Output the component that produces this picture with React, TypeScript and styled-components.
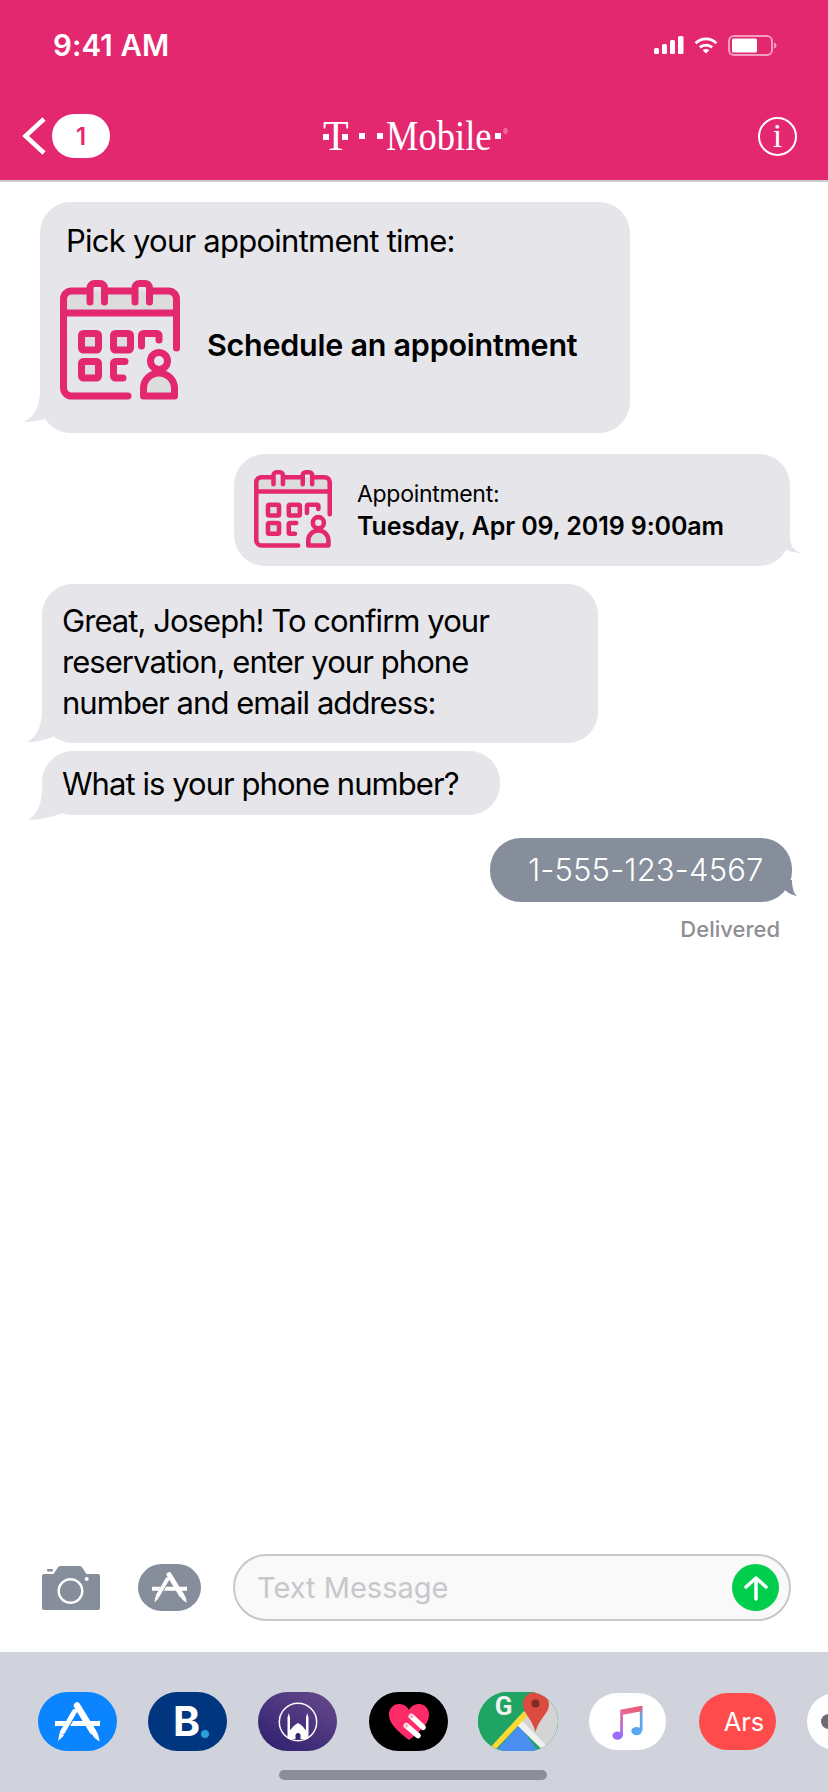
import React from "react";
import styled, { createGlobalStyle } from "styled-components";

const pink = "#e4286f";
const fillGray = "#dcdcdc";
const bubbleGray = "#e5e5ea";
const sentGray = "#858e9a";

const GlobalStyle = createGlobalStyle`
  html, body {
    margin: 0;
    padding: 0;
    background: #fff;
  }
  body {
    font-family: Inter, "Liberation Sans", sans-serif;
    color: #000;
  }
`;

const CalendarIcon: React.FC<{ size: number }> = ({ size }) => (
  <svg width={size} height={size} viewBox="0 0 120 120" fill="none">
    <path d="M4 11h112v22H4z" fill={fillGray} />
    <g stroke={pink} strokeWidth="7" strokeLinecap="round" strokeLinejoin="round">
      <path d="M116.500 68V19a8 8 0 0 0-8-8H93M71 11H48M26 11H11.500a8 8 0 0 0-8 8v89a8 8 0 0 0 8 8H68" />
      <path d="M3.500 33h113" />
      <path d="M30 22V8a4.500 4.500 0 0 1 4.500-4.500h5.500A4.500 4.500 0 0 1 44.500 8v14" />
      <path d="M75 22V8a4.500 4.500 0 0 1 4.500-4.500h5.500A4.500 4.500 0 0 1 89.500 8v14" />
      <rect x="21.500" y="53.500" width="17" height="16.500" rx="2" fill={fillGray} />
      <rect x="53.500" y="53.500" width="17" height="16.500" rx="2" fill={fillGray} />
      <path d="M81.500 66V55.500a2 2 0 0 1 2-2H97a2 2 0 0 1 2 2V60" />
      <rect x="21.500" y="81.500" width="17" height="16.500" rx="2" fill={fillGray} />
      <path d="M65 81.500H55.500a2 2 0 0 0-2 2V96a2 2 0 0 0 2 2H63" />
      <circle cx="99" cy="81" r="8.500" />
      <path d="M83.500 116v-7.500a15.500 15.500 0 0 1 31 0V116z" fill={fillGray} />
    </g>
  </svg>
);

const AppStoreGlyph: React.FC<{ scale?: number }> = ({ scale = 1 }) => (
  <svg width={45 * scale} height={40 * scale} viewBox="0 0 45 40" fill="#fff">
    <path d="M0 19h11l-2.500 5H1.500a2.500 2.500 0 0 1-1.500-5zM18 19h10l2.800 5H15.200zM33.500 19H43a2.500 2.500 0 0 1 2 5h-8.500z" />
    <path d="M22 3.500L37.500 29" stroke="#fff" strokeWidth="6.500" strokeLinecap="round" />
    <path d="M19.500 9.500L7.500 30" stroke="#fff" strokeWidth="5" strokeLinecap="round" />
    <path d="M4.500 31l4.500 2.500-6 5.500z" />
    <path d="M36 30l4.500-2.500c2 3 3.500 7 4 12-3.500-2-7-5-8.500-9.500z" />
  </svg>
);

// tail shapes, drawn with the tip on the left edge of the box
const tailPick = { d: "M17 0C17 15 12 28 0 32C8 32 15 31 22 29L30 0Z", w: 30, h: 33 };
const tailConfirm = { d: "M15 0C15 12 11 26 0 31C9 31 17 29 26 26L30 0Z", w: 30, h: 32 };
const tailQuestion = { d: "M14 0C14 14 10 26 0 32C12 32 24 29 35 25L40 0Z", w: 40, h: 33 };
const tailAppointment = { d: "M12 0C12 9 8 14 0 16C5 16 11 15 15 13L24 0Z", w: 24, h: 17 };
const tailSent = { d: "M5 0C5 8 3 14 0 16C4 15.500 9 13 12 10L22 0Z", w: 22, h: 17 };

type TailShape = { d: string; w: number; h: number };

const TailSvg: React.FC<{ shape: TailShape; color: string; className?: string }> = ({ shape, color, className }) => (
  <svg className={className} width={shape.w} height={shape.h} viewBox={`0 0 ${shape.w} ${shape.h}`}>
    <path d={shape.d} fill={color} />
  </svg>
);

const LeftTail = styled(TailSvg)<{ $reach: number; $bottom: number }>`
  position: absolute;
  left: ${(p) => -p.$reach}px;
  bottom: ${(p) => p.$bottom}px;
`;

const RightTail = styled(TailSvg)<{ $reach: number; $bottom: number }>`
  position: absolute;
  right: ${(p) => -p.$reach}px;
  bottom: ${(p) => p.$bottom}px;
  transform: scaleX(-1);
`;

const Page = styled.div`
  width: 828px;
  height: 1792px;
  display: flex;
  flex-direction: column;
  overflow: hidden;
`;

const Header = styled.header`
  flex: none;
  height: 180px;
  background: ${pink};
  border-bottom: 2px solid #cdcdcd;
  color: #fff;
  display: flex;
  flex-direction: column;
`;

const StatusBar = styled.div`
  height: 92px;
  box-sizing: border-box;
  padding: 0 51px 2px 53px;
  display: flex;
  justify-content: space-between;
  align-items: center;
`;

const Clock = styled.span`
  font-size: 29.500px;
  font-weight: 600;
  letter-spacing: 0.1px;
`;

const StatusIcons = styled.div`
  display: flex;
  align-items: center;
  gap: 10px;
`;

const NavBar = styled.div`
  height: 88px;
  padding: 0 31px 0 22px;
  display: grid;
  grid-template-columns: 1fr auto 1fr;
  align-items: center;
`;

const BackGroup = styled.div`
  display: flex;
  align-items: center;
  gap: 6px;
`;

const CountBadge = styled.span`
  width: 58px;
  height: 44px;
  border-radius: 22px;
  background: #fff;
  color: ${pink};
  font-size: 24px;
  font-weight: 600;
  display: flex;
  align-items: center;
  justify-content: center;
`;

const Logo = styled.div`
  display: flex;
  align-items: center;
  width: 183px;
  margin-left: 10px;
  font-family: "Liberation Serif", serif;
  font-size: 42px;
  line-height: 1;
`;

const LogoDot = styled.i<{ $ml?: number }>`
  display: block;
  flex: none;
  width: 6px;
  height: 6px;
  background: #fff;
  margin-left: ${(p) => p.$ml ?? 0}px;
`;

const LogoT = styled.span`
  position: relative;
  flex: none;
  width: 25px;
  text-align: center;
`;

const LogoTDot = styled(LogoDot)<{ $end: "left" | "right" }>`
  position: absolute;
  top: 19px;
  ${(p) => p.$end}: 0;
`;

const LogoWord = styled.span`
  flex: none;
  width: 105px;
  margin-left: 3px;
  white-space: nowrap;
  transform: scaleX(0.87);
  transform-origin: left center;
`;

const LogoMark = styled.span`
  font-size: 7px;
  margin: -10px 0 0 2px;
  opacity: 0.7;
  font-family: "Liberation Sans", sans-serif;
`;

const InfoIcon = styled.div`
  justify-self: end;
  width: 39px;
  height: 39px;
  border: 2px solid #fff;
  border-radius: 50%;
  box-sizing: border-box;
  display: flex;
  align-items: center;
  justify-content: center;
  font-family: "Liberation Serif", serif;
  font-size: 34px;
  line-height: 1;
`;

const Messages = styled.main`
  flex: 1;
  min-height: 0;
  padding-top: 20px;
  display: flex;
  flex-direction: column;
`;

const Bubble = styled.div<{
  $side: "left" | "right";
  $x: number;
  $top: number;
  $w: number;
  $h: number;
  $bg?: string;
}>`
  position: relative;
  box-sizing: border-box;
  flex: none;
  width: ${(p) => p.$w}px;
  height: ${(p) => p.$h}px;
  margin-top: ${(p) => p.$top}px;
  ${(p) => (p.$side === "left" ? `margin-left: ${p.$x}px;` : `margin-left: auto; margin-right: ${p.$x}px;`)}
  background: ${(p) => p.$bg ?? bubbleGray};
  border-radius: 31px;
`;

const PickBubble = styled(Bubble)`
  padding: 20px 0 0 20px;
`;

const PickTitle = styled.div`
  font-size: 31px;
  line-height: 38px;
  margin-left: 6px;
  letter-spacing: -0.75px;
  white-space: nowrap;
`;

const ScheduleRow = styled.div`
  margin-top: 20px;
  display: flex;
  align-items: center;
  gap: 27px;
`;

const ScheduleLabel = styled.div`
  margin-top: 8px;
  font-size: 30.500px;
  font-weight: 600;
  letter-spacing: -0.25px;
  white-space: nowrap;
`;

const AppointmentBubble = styled(Bubble)`
  padding: 16px 0 0 20px;
  display: flex;
  align-items: flex-start;
  gap: 25px;
`;

const AppointmentText = styled.div`
  padding-top: 8px;
`;

const AppointmentLabel = styled.div`
  font-size: 23px;
  line-height: 32px;
  letter-spacing: -0.3px;
`;

const AppointmentValue = styled.div`
  font-size: 25px;
  font-weight: 600;
  line-height: 33px;
  letter-spacing: -0.1px;
  white-space: nowrap;
`;

const BubbleText = styled.div`
  padding: 16px 20px 0;
  font-size: 31px;
  line-height: 41px;
  letter-spacing: -0.95px;
  white-space: nowrap;
`;

const QuestionText = styled(BubbleText)`
  padding-top: 12px;
`;

const PhoneText = styled.div`
  padding: 11px 0 0 38px;
  color: #fff;
  font-size: 31px;
  font-weight: 300;
  line-height: 41px;
  letter-spacing: 0.15px;
  white-space: nowrap;
`;

const Delivered = styled.div`
  margin: 13px 48px 0 0;
  text-align: right;
  font-size: 22px;
  font-weight: 500;
  line-height: 28px;
  color: #8e8e93;
`;

const Composer = styled.div`
  flex: none;
  height: 98px;
  padding: 0 37px 0 42px;
  box-sizing: border-box;
  display: flex;
  align-items: flex-start;
`;

const ComposerIcon = styled.div`
  width: 58px;
  height: 44px;
  margin-top: 12px;
`;

const AppPill = styled.div`
  width: 63px;
  height: 47px;
  margin: 10px 32px 0 38px;
  border-radius: 24px;
  background: ${sentGray};
  display: flex;
  align-items: center;
  justify-content: center;
`;

const InputField = styled.div`
  flex: 1;
  height: 67px;
  box-sizing: border-box;
  border: 2px solid #c8c8cc;
  border-radius: 34px;
  background: #f9f9f9;
  padding: 0 10px 0 22px;
  display: flex;
  align-items: center;
  justify-content: space-between;
`;

const Placeholder = styled.span`
  font-size: 29px;
  color: #c7c7cc;
`;

const SendButton = styled.div`
  width: 47px;
  height: 47px;
  border-radius: 50%;
  background: #00ce4c;
  display: flex;
  align-items: center;
  justify-content: center;
`;

const Dock = styled.div`
  flex: none;
  height: 140px;
  background: #d0d3db;
  position: relative;
  overflow: hidden;
`;

const DockRow = styled.div`
  padding: 40px 0 0 38px;
  display: flex;
  align-items: center;
  width: 900px;
`;

const AppTile = styled.div<{ $bg: string; $w?: number; $h?: number; $ml?: number }>`
  flex: none;
  width: ${(p) => p.$w ?? 79}px;
  height: ${(p) => p.$h ?? 59}px;
  margin-left: ${(p) => p.$ml ?? 0}px;
  border-radius: 30px;
  background: ${(p) => p.$bg};
  display: flex;
  align-items: center;
  justify-content: center;
  overflow: hidden;
  position: relative;
`;

const BookingB = styled.span`
  color: #fff;
  font-size: 41px;
  font-weight: 700;
  line-height: 1;
  margin-left: -2px;
`;

const BookingDot = styled.i`
  position: absolute;
  left: 53px;
  top: 38px;
  width: 8px;
  height: 8px;
  border-radius: 50%;
  background: #2a9fd8;
`;

const ArsLabel = styled.span`
  color: #fff;
  font-size: 25.500px;
  margin-left: 13px;
`;

const CutOffDot = styled.i`
  position: absolute;
  left: 14px;
  top: 21px;
  width: 15px;
  height: 15px;
  border-radius: 50%;
  background: #6b6b70;
`;

const HomeIndicator = styled.div`
  position: absolute;
  left: 279px;
  bottom: 12px;
  width: 268px;
  height: 10px;
  border-radius: 5px;
  background: #8a8f99;
`;

const SignalIcon = () => (
  <svg width="30" height="18" viewBox="0 0 30 18" fill="#fff">
    <rect x="0" y="12" width="5" height="6" rx="1.500" />
    <rect x="8" y="8" width="5" height="10" rx="1.500" />
    <rect x="16" y="4" width="5" height="14" rx="1.500" />
    <rect x="24" y="0" width="5.500" height="18" rx="1.500" />
  </svg>
);

const WifiIcon = () => (
  <svg width="24" height="17" viewBox="0 0 25 18" fill="none" stroke="#fff" strokeWidth="3">
    <path d="M1.500 6.500C7.500 .5 17.500 .5 23.500 6.500" />
    <path d="M6 11c3.500-3.300 9.500-3.300 13 0" />
    <path d="M12.500 17.500L9 14c2-1.700 5-1.700 7 0z" fill="#fff" stroke="none" />
  </svg>
);

const BatteryIcon = () => (
  <svg width="49" height="21" viewBox="0 0 49 21">
    <rect x="1" y="1" width="43" height="19" rx="5" fill="none" stroke="#fff" strokeOpacity=".55" strokeWidth="2" />
    <rect x="4" y="3.500" width="25" height="14" rx="1.500" fill="#fff" />
    <path d="M46 7.500c1.500.4 2.500 1.500 2.500 3s-1 2.600-2.500 3z" fill="#fff" fillOpacity=".55" />
  </svg>
);

const BackChevron = () => (
  <svg width="24" height="38" viewBox="0 0 24 38" fill="none" stroke="#fff" strokeWidth="4.500">
    <path d="M22 2L3.500 19 22 36" />
  </svg>
);

const CameraIcon = () => (
  <svg width="58" height="44" viewBox="0 0 58 44">
    <path
      fillRule="evenodd"
      fill={sentGray}
      d="M2 8h9.500l4-6c.6-1 1.500-2 3-2h19c1.500 0 2.400 1 3 2l4 6H56a2 2 0 0 1 2 2v32a2 2 0 0 1-2 2H2a2 2 0 0 1-2-2V10a2 2 0 0 1 2-2zm26.500 4a13 13 0 1 0 0 26 13 13 0 0 0 0-26zm0 2.400a10.600 10.600 0 1 1 0 21.200 10.600 10.600 0 0 1 0-21.200zM44.700 11a2 2 0 1 0 0 4 2 2 0 0 0 0-4z"
    />
    <rect x="5" y="3" width="6" height="2.500" rx="1" fill={sentGray} />
  </svg>
);

const UpArrow = () => (
  <svg width="24" height="26" viewBox="0 0 24 26" fill="none" stroke="#fff" strokeWidth="3.500" strokeLinecap="round" strokeLinejoin="round">
    <path d="M12 24V3M2 12L12 3l10 9" />
  </svg>
);

const MosqueGlyph = () => (
  <svg width="40" height="40" viewBox="0 0 40 40">
    <circle cx="20" cy="20" r="18.700" fill="none" stroke="#fff" strokeWidth="1.500" />
    <path fill="#fff" d="M9.500 15.500l1.300-4.500 1.200 4.500V35H9.500zM28 15.500l1.200-4.500 1.300 4.500V35H28z" />
    <path fill="#fff" d="M10 37V29c3 0 4-5 10-8 6 3 7 8 10 8v8z" />
    <path d="M17.500 37v-3.500a2.500 2.500 0 0 1 5 0V37z" fill="#33246f" />
  </svg>
);

const HeartGlyph = () => (
  <svg width="40" height="36" viewBox="0 0 40 36">
    <path
      d="M20 36C7 26 0 19 0 10.500 0 4.500 4.500 0 10 0c4 0 8 2 10 6 2-4 6-6 10-6 5.500 0 10 4.500 10 10.500C40 19 33 26 20 36z"
      fill="#ff2a68"
    />
    <path d="M22.300 12.300L34 23.300M17.300 21.700L29 31.700" stroke="#fff" strokeWidth="5.500" strokeLinecap="round" />
    <circle cx="22.500" cy="12.500" r="2" fill="#f8b8c8" />
    <circle cx="17.500" cy="21.700" r="2" fill="#f8b8c8" />
  </svg>
);

const MapsGlyph = () => (
  <svg width="80" height="59" viewBox="0 0 80 59">
    <rect width="80" height="59" fill="#1fa463" />
    <path d="M40 30L58 0H80V59H70z" fill="#d4d4d4" />
    <path d="M41 33L60 59H18z" fill="#4a8ef2" />
    <path d="M43 28L70 55 65.500 59 38 32z" fill="#f1f1f1" />
    <path d="M45.500 19.500L49.500 24 16 59H9z" fill="#fdd835" />
    <path d="M58 0C50 0 45 5 45 12.500c0 9 9 14 12.500 27.500C61 26.500 71 21.500 71 12.500 71 5 66 0 58 0z" fill="#db4b3f" />
    <circle cx="57.500" cy="11.500" r="4" fill="#7f2c22" />
    <text x="25.700" y="22.500" textAnchor="middle" fontFamily="Roboto, sans-serif" fontSize="26" fontWeight="700" fill="#f1f1f1">
      G
    </text>
  </svg>
);

const MusicGlyph = () => (
  <svg width="31" height="38" viewBox="0 0 34 40">
    <defs>
      <linearGradient id="note" x1="0.100" y1="1" x2="0.800" y2="0">
        <stop offset="0" stopColor="#9a6cff" />
        <stop offset="0.500" stopColor="#e56a9c" />
        <stop offset="1" stopColor="#ea5a72" />
      </linearGradient>
      <linearGradient id="noteRight" x1="0" y1="1" x2="0" y2="0">
        <stop offset="0" stopColor="#5aa8f0" />
        <stop offset="0.600" stopColor="#69a3e8" />
        <stop offset="1" stopColor="#e2607c" />
      </linearGradient>
    </defs>
    <path d="M9 6.500L31 2.500v6L12 12v24H9z" fill="url(#note)" />
    <ellipse cx="6" cy="35" rx="5.500" ry="4.500" fill="#9a6cff" />
    <path d="M30.500 2.500h3V30h-3z" fill="url(#noteRight)" />
    <ellipse cx="27" cy="30" rx="5.800" ry="4.500" fill="#5aa8f0" />
  </svg>
);

const App: React.FC = () => (
  <Page>
    <GlobalStyle />
    <Header>
      <StatusBar>
        <Clock>9:41 AM</Clock>
        <StatusIcons>
          <SignalIcon />
          <WifiIcon />
          <BatteryIcon />
        </StatusIcons>
      </StatusBar>
      <NavBar>
        <BackGroup>
          <BackChevron />
          <CountBadge>1</CountBadge>
        </BackGroup>
        <Logo>
          <LogoT>
            T
            <LogoTDot $end="left" />
            <LogoTDot $end="right" />
          </LogoT>
          <LogoDot $ml={11} />
          <LogoDot $ml={12} />
          <LogoWord>Mobile</LogoWord>
          <LogoDot $ml={4} />
          <LogoMark>®</LogoMark>
        </Logo>
        <InfoIcon>i</InfoIcon>
      </NavBar>
    </Header>

    <Messages>
      <PickBubble $side="left" $x={40} $top={0} $w={590} $h={231}>
        <LeftTail shape={tailPick} color={bubbleGray} $reach={17} $bottom={10} />
        <PickTitle>Pick your appointment time:</PickTitle>
        <ScheduleRow>
          <CalendarIcon size={120} />
          <ScheduleLabel>Schedule an appointment</ScheduleLabel>
        </ScheduleRow>
      </PickBubble>

      <AppointmentBubble $side="right" $x={38} $top={21} $w={556} $h={112}>
        <RightTail shape={tailAppointment} color={bubbleGray} $reach={12} $bottom={12} />
        <CalendarIcon size={78} />
        <AppointmentText>
          <AppointmentLabel>Appointment:</AppointmentLabel>
          <AppointmentValue>Tuesday, Apr 09, 2019 9:00am</AppointmentValue>
        </AppointmentText>
      </AppointmentBubble>

      <Bubble $side="left" $x={42} $top={18} $w={556} $h={159}>
        <LeftTail shape={tailConfirm} color={bubbleGray} $reach={15} $bottom={0} />
        <BubbleText>
          Great, Joseph! To confirm your
          <br />
          reservation, enter your phone
          <br />
          number and email address:
        </BubbleText>
      </Bubble>

      <Bubble $side="left" $x={42} $top={8} $w={458} $h={64}>
        <LeftTail shape={tailQuestion} color={bubbleGray} $reach={14} $bottom={-6} />
        <QuestionText>What is your phone number?</QuestionText>
      </Bubble>

      <Bubble $side="right" $x={36} $top={23} $w={302} $h={64} $bg={sentGray}>
        <RightTail shape={tailSent} color={sentGray} $reach={5} $bottom={5} />
        <PhoneText>1-555-123-4567</PhoneText>
      </Bubble>

      <Delivered>Delivered</Delivered>
    </Messages>

    <Composer>
      <ComposerIcon>
        <CameraIcon />
      </ComposerIcon>
      <AppPill>
        <AppStoreGlyph scale={0.78} />
      </AppPill>
      <InputField>
        <Placeholder>Text Message</Placeholder>
        <SendButton>
          <UpArrow />
        </SendButton>
      </InputField>
    </Composer>

    <Dock>
      <DockRow>
        <AppTile $bg="#0a84ff">
          <AppStoreGlyph />
        </AppTile>
        <AppTile $bg="#003580" $ml={31}>
          <BookingB>B</BookingB>
          <BookingDot />
        </AppTile>
        <AppTile $bg="linear-gradient(30deg, #2b1e6e, #6a4a8c)" $ml={31}>
          <MosqueGlyph />
        </AppTile>
        <AppTile $bg="#000" $ml={32}>
          <HeartGlyph />
        </AppTile>
        <AppTile $bg="#1fa463" $w={80} $ml={30}>
          <MapsGlyph />
        </AppTile>
        <AppTile $bg="#fff" $w={77} $h={57} $ml={31}>
          <MusicGlyph />
        </AppTile>
        <AppTile $bg="#ff4b4b" $w={77} $h={57} $ml={33}>
          <ArsLabel>Ars</ArsLabel>
        </AppTile>
        <AppTile $bg="#fff" $w={77} $h={57} $ml={31}>
          <CutOffDot />
        </AppTile>
      </DockRow>
      <HomeIndicator />
    </Dock>
  </Page>
);

export default App;
